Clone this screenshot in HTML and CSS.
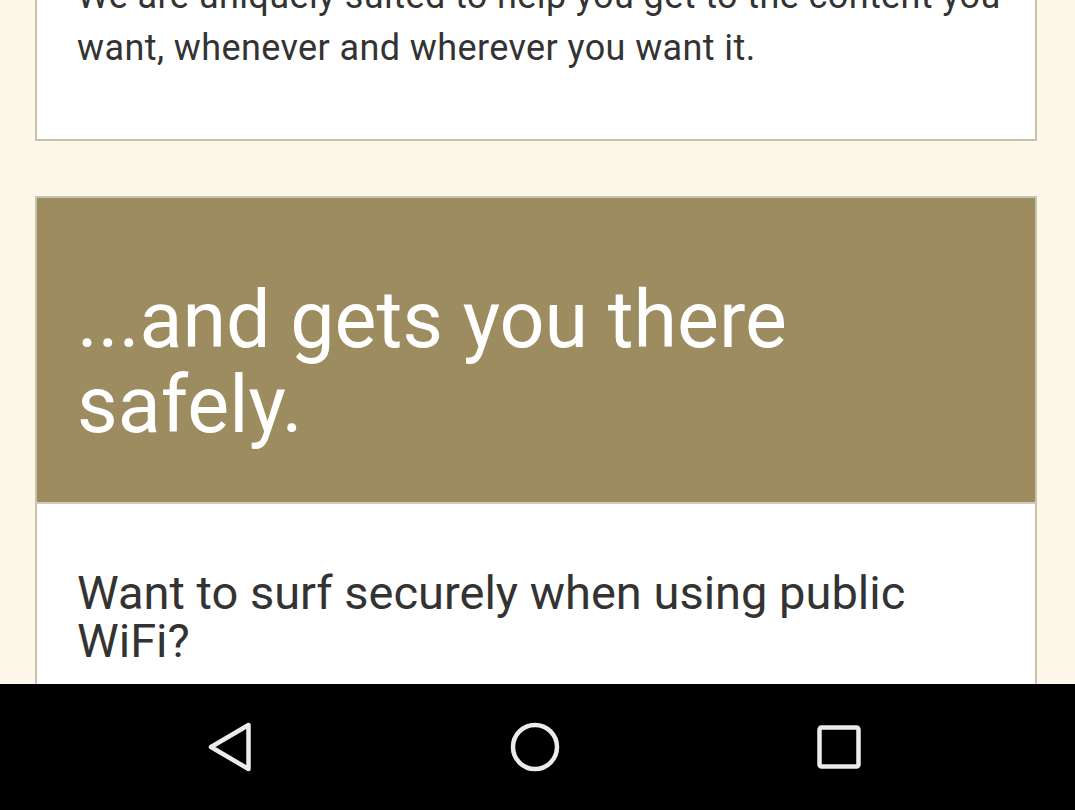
FILE: index.html
```html
<!DOCTYPE html>
<html>
<head>
<meta charset="utf-8">
<link rel="stylesheet" href="styles.css">
</head>
<body>
<div class="screen">
  <main class="content">
    <section class="card card-intro">
      <p class="lead">We are uniquely suited to help you get to the content you want, whenever and wherever you want it.</p>
    </section>
    <section class="card card-feature">
      <header class="feature-head">
        <h2>...and gets you there safely.</h2>
      </header>
      <div class="feature-body">
        <p class="question">Want to surf securely when using public WiFi?</p>
      </div>
    </section>
  </main>
  <nav class="navbar">
    <button class="nav-btn nav-back" aria-label="Back">
      <svg width="44" height="50" viewBox="0 0 44 50"><path d="M40.5 3 L40.5 47 L3 25 Z" fill="none" stroke="#ececec" stroke-width="4.5" stroke-linejoin="round"/></svg>
    </button>
    <button class="nav-btn nav-home" aria-label="Home">
      <svg width="50" height="50" viewBox="0 0 50 50"><circle cx="25" cy="25" r="22" fill="none" stroke="#ececec" stroke-width="4.5"/></svg>
    </button>
    <button class="nav-btn nav-recent" aria-label="Recents">
      <svg width="46" height="46" viewBox="0 0 46 46"><rect x="3.5" y="3.5" width="39" height="39" rx="2" fill="none" stroke="#ececec" stroke-width="4.5"/></svg>
    </button>
  </nav>
</div>
</body>
</html>
```

FILE: styles.css
```css
* { box-sizing: border-box; }
html, body { margin: 0; padding: 0; }
body {
  background: #fdf7ea;
  font-family: Roboto, "Liberation Sans", sans-serif;
}
.screen {
  width: 1075px;
  height: 810px;
  display: flex;
  flex-direction: column;
  overflow: hidden;
}
.content {
  flex: 1;
  overflow: hidden;
  padding: 0 38px 0 35px;
  background: #fdf7ea;
}
.card {
  background: #fff;
  border: 2px solid #c9c3ab;
}
.card-intro {
  margin-top: -72px;
  padding: 40px 28px 65px 40px;
}
.lead {
  margin: 0;
  font-size: 36px;
  line-height: 52px;
  letter-spacing: 0.4px;
  color: #333;
}
.card-feature {
  margin-top: 55px;
  border-bottom: none;
}
.feature-head {
  background: #9d8c5f;
  padding: 80px 40px 54px 40px;
  border-bottom: 2px solid #d2ccb5;
}
.feature-head h2 {
  margin: 0;
  font-weight: 400;
  font-size: 79px;
  line-height: 85px;
  color: #fff;
}
.feature-body {
  padding: 65px 40px 200px 40px;
}
.question {
  margin: 0;
  font-size: 47px;
  line-height: 48px;
  color: #333;
}
.navbar {
  height: 126px;
  flex: none;
  background: #000;
  display: flex;
  align-items: center;
  gap: 258px;
  padding: 0 0 0 208px;
}
.nav-btn {
  background: none;
  border: none;
  padding: 0;
  display: flex;
  align-items: center;
  justify-content: center;
}
.nav-home { margin-left: 0; }
.nav-recent { margin-left: -2px; }
```
